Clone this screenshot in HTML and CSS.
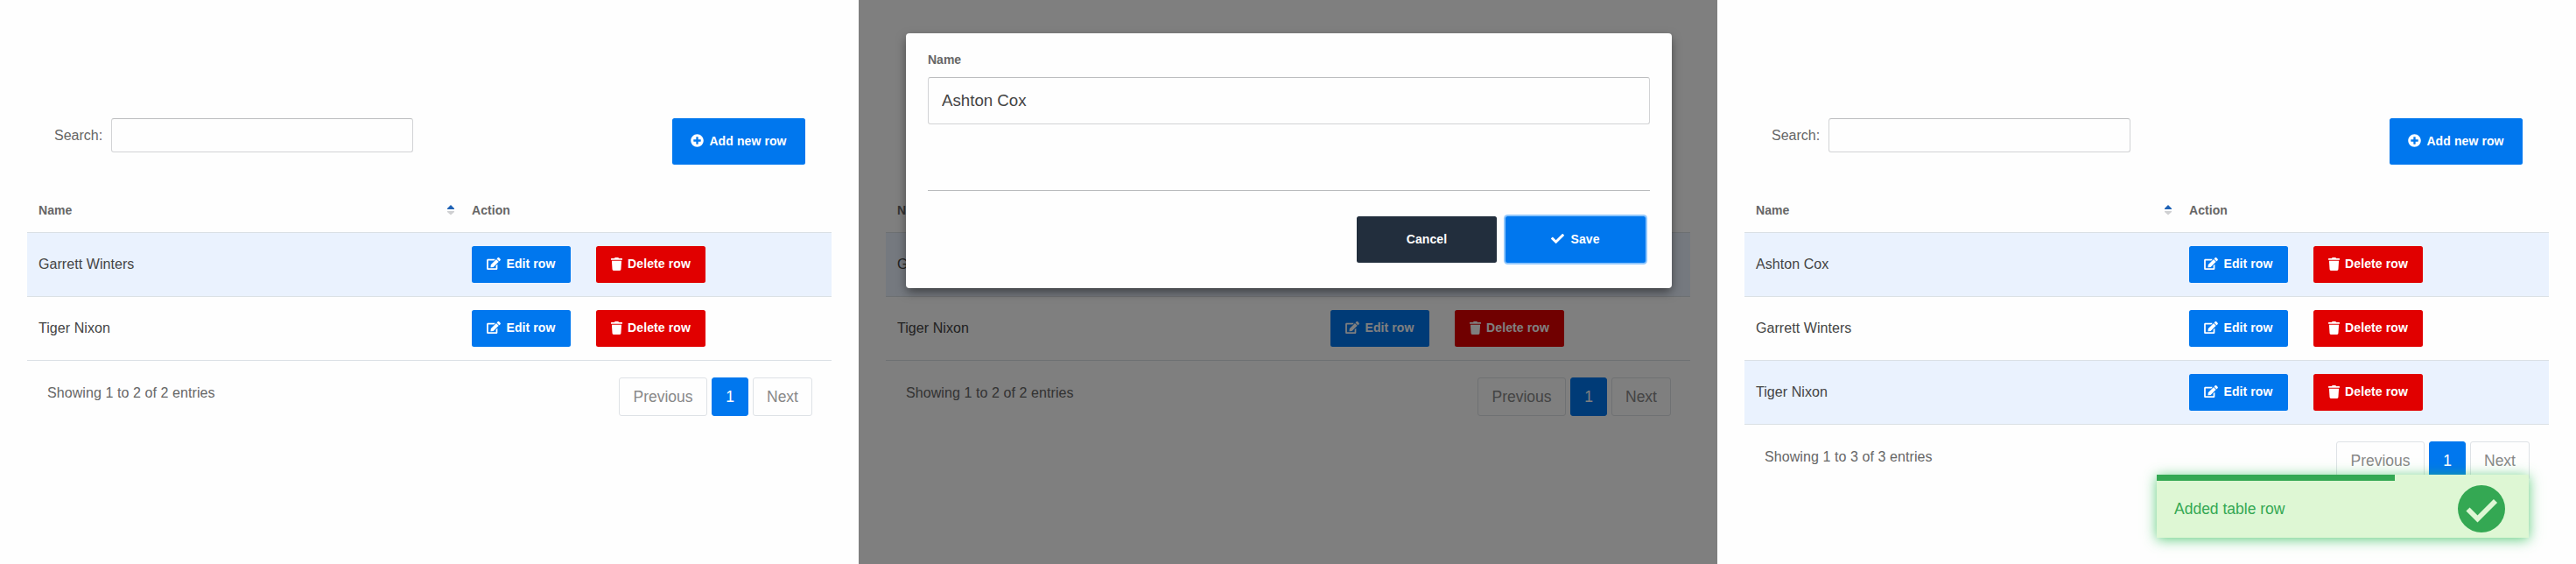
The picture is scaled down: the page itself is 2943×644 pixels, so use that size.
FILE: index.html
```html
<!DOCTYPE html>
<html lang="en">
<head>
<meta charset="utf-8">
<title>Table rows</title>
<link rel="stylesheet" href="styles.css">
</head>
<body>
<svg class="defs" width="0" height="0">
  <symbol id="plus" viewBox="0 0 512 512"><path d="M256 8C119 8 8 119 8 256s111 248 248 248 248-111 248-248S393 8 256 8zm144 276c0 6.600-5.400 12-12 12h-92v92c0 6.600-5.400 12-12 12h-56c-6.600 0-12-5.400-12-12v-92h-92c-6.600 0-12-5.400-12-12v-56c0-6.600 5.400-12 12-12h92v-92c0-6.600 5.400-12 12-12h56c6.600 0 12 5.400 12 12v92h92c6.600 0 12 5.400 12 12v56z"/></symbol>
  <symbol id="edit" viewBox="0 0 576 512"><path d="M402.600 83.200l90.200 90.200c3.800 3.800 3.800 10 0 13.800L274.400 405.600l-92.800 10.300c-12.400 1.400-22.900-9.100-21.500-21.500l10.300-92.800L388.800 83.200c3.800-3.800 10-3.800 13.800 0zm162-22.900l-48.800-48.800c-15.200-15.200-39.900-15.200-55.200 0l-35.400 35.400c-3.800 3.800-3.800 10 0 13.800l90.200 90.200c3.800 3.800 10 3.800 13.800 0l35.400-35.400c15.200-15.300 15.200-40 0-55.200zM384 346.200V448H64V128h229.800c3.200 0 6.200-1.300 8.500-3.500l40-40c7.600-7.600 2.200-20.500-8.500-20.500H48C21.500 64 0 85.500 0 112v352c0 26.500 21.500 48 48 48h352c26.500 0 48-21.500 48-48V306.200c0-10.700-12.900-16-20.500-8.500l-40 40c-2.200 2.300-3.500 5.300-3.500 8.500z"/></symbol>
  <symbol id="trash" viewBox="0 0 448 512"><path d="M432 32H312l-9.400-18.700A24 24 0 0 0 281.100 0H166.800a23.700 23.700 0 0 0-21.400 13.300L136 32H16A16 16 0 0 0 0 48v32a16 16 0 0 0 16 16h416a16 16 0 0 0 16-16V48a16 16 0 0 0-16-16zM53.200 467a48 48 0 0 0 47.900 45h245.800a48 48 0 0 0 47.900-45L416 128H32z"/></symbol>
  <symbol id="check" viewBox="0 0 512 512"><path d="M173.900 439.400l-166.400-166.400c-10-10-10-26.200 0-36.200l36.200-36.200c10-10 26.200-10 36.200 0L192 312.700 432.100 72.600c10-10 26.200-10 36.200 0l36.200 36.200c10 10 10 26.200 0 36.200l-294.400 294.400c-10 10-26.200 10-36.200 0z"/></symbol>
  <symbol id="sort" viewBox="0 0 8 12"><path fill="#1f62b5" d="M4 0L8 4V5H0V4z"/><path fill="#cfd0d2" d="M0 7H8V8L4 11.500L0 8z"/></symbol>
</svg>
<main class="screens">
  <section class="screen">
    <div class="toolbar">
      <label class="search">Search:<input class="search-input" type="text"></label>
      <button class="btn btn-add"><svg class="ic-plus"><use href="#plus"/></svg>Add new row</button>
    </div>
    <div class="table">
      <div class="row head"><div class="name">Name<svg class="ic-sort"><use href="#sort"/></svg></div><div class="actions">Action</div></div>
      <div class="row odd"><div class="name">Garrett Winters</div><div class="actions"><button class="btn btn-edit"><svg class="ic-edit"><use href="#edit"/></svg>Edit row</button><button class="btn btn-delete"><svg class="ic-trash"><use href="#trash"/></svg>Delete row</button></div></div>
      <div class="row"><div class="name">Tiger Nixon</div><div class="actions"><button class="btn btn-edit"><svg class="ic-edit"><use href="#edit"/></svg>Edit row</button><button class="btn btn-delete"><svg class="ic-trash"><use href="#trash"/></svg>Delete row</button></div></div>
    </div>
    <div class="footer">
      <span class="info">Showing 1 to 2 of 2 entries</span>
      <div class="pages"><span class="page prev">Previous</span><span class="page current">1</span><span class="page next">Next</span></div>
    </div>
  </section>

  <section class="screen">
    <div class="toolbar">
      <label class="search">Search:<input class="search-input" type="text"></label>
      <button class="btn btn-add"><svg class="ic-plus"><use href="#plus"/></svg>Add new row</button>
    </div>
    <div class="table">
      <div class="row head"><div class="name">Name<svg class="ic-sort"><use href="#sort"/></svg></div><div class="actions">Action</div></div>
      <div class="row odd"><div class="name">Garrett Winters</div><div class="actions"><button class="btn btn-edit"><svg class="ic-edit"><use href="#edit"/></svg>Edit row</button><button class="btn btn-delete"><svg class="ic-trash"><use href="#trash"/></svg>Delete row</button></div></div>
      <div class="row"><div class="name">Tiger Nixon</div><div class="actions"><button class="btn btn-edit"><svg class="ic-edit"><use href="#edit"/></svg>Edit row</button><button class="btn btn-delete"><svg class="ic-trash"><use href="#trash"/></svg>Delete row</button></div></div>
    </div>
    <div class="footer">
      <span class="info">Showing 1 to 2 of 2 entries</span>
      <div class="pages"><span class="page prev">Previous</span><span class="page current">1</span><span class="page next">Next</span></div>
    </div>
    <div class="overlay">
      <div class="modal">
        <label class="field">Name<input class="field-input" type="text" value="Ashton Cox"></label>
        <div class="modal-actions">
          <button class="btn btn-cancel">Cancel</button>
          <button class="btn btn-save"><svg class="ic-check"><use href="#check"/></svg>Save</button>
        </div>
      </div>
    </div>
  </section>

  <section class="screen">
    <div class="toolbar">
      <label class="search">Search:<input class="search-input" type="text"></label>
      <button class="btn btn-add"><svg class="ic-plus"><use href="#plus"/></svg>Add new row</button>
    </div>
    <div class="table">
      <div class="row head"><div class="name">Name<svg class="ic-sort"><use href="#sort"/></svg></div><div class="actions">Action</div></div>
      <div class="row odd"><div class="name">Ashton Cox</div><div class="actions"><button class="btn btn-edit"><svg class="ic-edit"><use href="#edit"/></svg>Edit row</button><button class="btn btn-delete"><svg class="ic-trash"><use href="#trash"/></svg>Delete row</button></div></div>
      <div class="row"><div class="name">Garrett Winters</div><div class="actions"><button class="btn btn-edit"><svg class="ic-edit"><use href="#edit"/></svg>Edit row</button><button class="btn btn-delete"><svg class="ic-trash"><use href="#trash"/></svg>Delete row</button></div></div>
      <div class="row odd"><div class="name">Tiger Nixon</div><div class="actions"><button class="btn btn-edit"><svg class="ic-edit"><use href="#edit"/></svg>Edit row</button><button class="btn btn-delete"><svg class="ic-trash"><use href="#trash"/></svg>Delete row</button></div></div>
    </div>
    <div class="footer">
      <span class="info">Showing 1 to 3 of 3 entries</span>
      <div class="pages"><span class="page prev">Previous</span><span class="page current">1</span><span class="page next">Next</span></div>
    </div>
    <div class="toast">
      <div class="toast-progress"></div>
      <div class="toast-body">
        <span>Added table row</span>
        <svg class="toast-icon" viewBox="0 0 54 54"><circle cx="27" cy="27" r="27" fill="#34a853"/><path d="M11.500 27.500L22.500 38.500L43 18" fill="none" stroke="#def7d4" stroke-width="5.800" stroke-linejoin="miter"/></svg>
      </div>
    </div>
  </section>
</main>
</body>
</html>
```
FILE: styles.css
```css
* { box-sizing: border-box; }
body {
  margin: 0;
  background: #fefefe;
  color: #666;
  font: 16px/20px "Liberation Sans", Arial, sans-serif;
}
.defs { position: absolute; }
.screens { display: flex; height: 644px; overflow: hidden; }
.screen {
  position: relative;
  flex: 0 0 981px;
  height: 644px;
  padding: 135px 31px 0;
  background: #fefefe;
}
.toolbar {
  display: flex;
  align-items: flex-start;
  justify-content: space-between;
  height: 72px;
  padding: 0 30px 0 31px;
}
.search { display: flex; align-items: center; height: 39px; }
.search-input {
  width: 345px;
  height: 39px;
  margin-left: 10px;
  border: 1px solid #d2d3d5;
  border-top-color: #bcbdbf;
  border-radius: 3px;
  background: #fefefe;
}
.btn {
  display: inline-flex;
  align-items: center;
  justify-content: center;
  height: 42px;
  padding: 0 0 2px;
  border: 0;
  border-radius: 2.500px;
  background: #0077ee;
  color: #fff;
  font: bold 14px/20px "Liberation Sans", Arial, sans-serif;
  letter-spacing: 0.1px;
  white-space: nowrap;
}
.btn svg { fill: #fff; }
.btn-add { width: 152px; height: 53px; }
.btn-edit { width: 113px; }
.btn-delete { width: 125px; margin-left: 29px; background: #e10000; }
.ic-plus { width: 15px; height: 15px; margin-right: 6px; }
.ic-edit { width: 16px; height: 14px; margin-right: 6px; }
.ic-trash { width: 13px; height: 15px; margin-right: 6px; }
.ic-check { width: 15px; height: 15px; margin-right: 7px; }
.row {
  display: flex;
  align-items: center;
  width: 919px;
  height: 73px;
  border-bottom: 1px solid #dae0e5;
  color: #444;
  letter-spacing: 0.06px;
}
.head { height: 59px; padding-top: 7px; color: #666; font: bold 14px/20px "Liberation Sans", Arial, sans-serif; }
.odd { background: #eaf2fe; }
.name {
  display: flex;
  align-items: center;
  justify-content: space-between;
  width: 508px;
  padding: 0 20px 0 13px;
}
.actions { display: flex; align-items: center; }
.ic-sort { width: 8px; height: 12px; }
.footer {
  display: flex;
  align-items: flex-start;
  justify-content: space-between;
  padding: 19px 22px 0 23px;
}
.info { padding-top: 8px; letter-spacing: 0.08px; }
.pages { display: flex; gap: 5px; }
.page {
  display: flex;
  align-items: center;
  justify-content: center;
  height: 44px;
  border: 1px solid #dee2e6;
  border-radius: 3px;
  color: #888;
  font-size: 17.500px;
}
.prev { width: 101px; }
.current { width: 42px; border-color: #0077ee; background: #0077ee; color: #fff; }
.next { width: 68px; }
.overlay {
  position: absolute;
  inset: 0;
  padding: 38px 52px 0 54px;
  background: rgba(0, 0, 0, 0.5);
}
.modal {
  height: 291px;
  padding: 20px 25px 0;
  border-radius: 4px;
  background: #fefefe;
  box-shadow: 0 5px 12px -1px rgba(0, 0, 0, 0.5);
}
.field { display: block; height: 160px; border-bottom: 1px solid #b9bbbd; font: bold 14px/20px "Liberation Sans", Arial, sans-serif; }
.field-input {
  display: block;
  width: 825px;
  height: 54px;
  margin-top: 10px;
  padding: 0 15px;
  border: 1px solid #d2d3d5;
  border-top-color: #bcbdbf;
  border-radius: 3px;
  background: #fefefe;
  color: #444;
  font: 18.700px/24px "Liberation Sans", Arial, sans-serif;
}
.modal-actions { display: flex; justify-content: flex-end; gap: 10px; padding: 29px 5px 0 0; }
.btn-cancel, .btn-save { width: 160px; height: 53px; }
.btn-cancel { background: #222e3d; }
.btn-save { box-shadow: 0 0 0 2px #8fc6fc; }
.toast {
  position: absolute;
  right: 54px;
  bottom: 30px;
  width: 425px;
  height: 72px;
  background: #def7d4;
  color: #34a853;
  font-size: 17.500px;
  box-shadow: 0 2px 14px rgba(44, 190, 84, 0.75);
}
.toast-progress { width: 272px; height: 7px; background: #34a853; }
.toast-body { display: flex; align-items: center; justify-content: space-between; height: 64px; padding: 0 27px 0 20px; }
.toast-icon { width: 54px; height: 54px; }
```
